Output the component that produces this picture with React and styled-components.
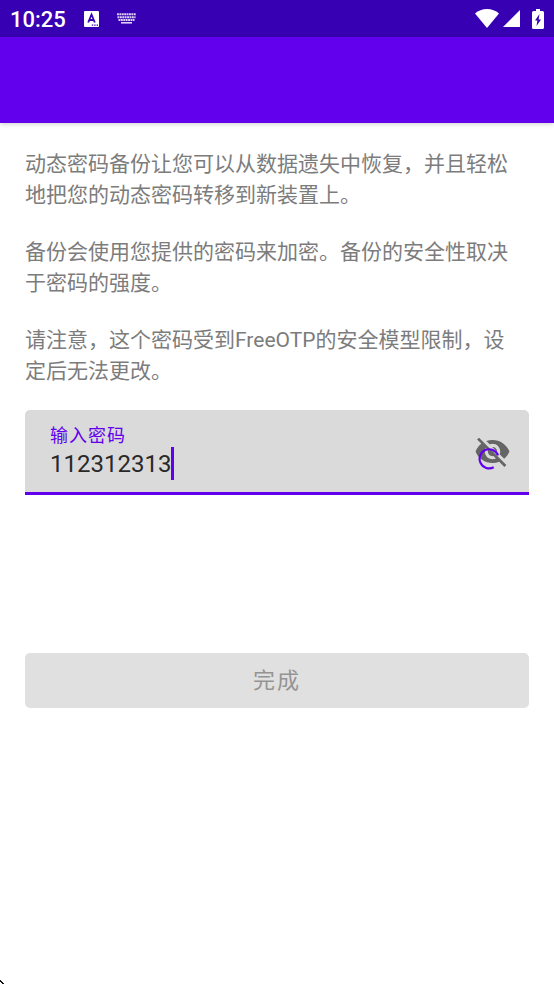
import React, { useState } from "react";
import styled, { createGlobalStyle } from "styled-components";

const GlobalStyle = createGlobalStyle`
  *, *::before, *::after { box-sizing: border-box; }
  body {
    margin: 0;
    background: #fff;
    font-family: Roboto, "Noto Sans CJK SC", sans-serif;
  }
`;

const Screen = styled.div`
  min-height: 100vh;
  display: flex;
  flex-direction: column;
`;

const StatusBar = styled.header`
  height: 37px;
  padding: 0 10px;
  display: flex;
  align-items: center;
  justify-content: space-between;
  background: #3700b3;
  color: #fff;
`;

const StatusGroup = styled.div`
  display: flex;
  align-items: center;
  gap: ${(p) => p.$gap}px;

  svg { display: block; }
`;

const Clock = styled.time`
  font-size: 22px;
  line-height: 26px;
  font-weight: 500;
  padding-top: 2px;
`;

const AppBar = styled.div`
  height: 86px;
  background: #6200ee;
  box-shadow: 0 1px 5px rgba(0, 0, 0, 0.2);
`;

const Content = styled.main`
  flex: 1;
  padding: 26px 25px;
  display: flex;
  flex-direction: column;
`;

const Message = styled.p`
  margin: 0 0 26px;
  color: #7c7c7c;
  font-size: 21px;
  line-height: 31px;

  &:last-of-type { margin-bottom: 23px; }
`;

const Field = styled.div`
  height: 85px;
  padding: 0 18px 0 25px;
  display: flex;
  align-items: center;
  justify-content: space-between;
  background: #dadada;
  border-bottom: 3px solid #6200ee;
  border-radius: 5px 5px 0 0;
`;

const FieldText = styled.div`
  min-width: 0;
  padding-top: 2px;
  display: flex;
  flex-direction: column;
`;

const FieldLabel = styled.label`
  color: #6200ee;
  font-size: 18px;
  line-height: 22px;
  letter-spacing: 1px;
`;

const InputLine = styled.div`
  display: flex;
  align-items: center;
`;

const PasswordInput = styled.input`
  field-sizing: content;
  max-width: 100%;
  height: 33px;
  padding: 2px 0 0;
  border: 0;
  outline: 0;
  background: transparent;
  color: #292929;
  caret-color: transparent;
  font: 400 24px/30px Roboto, sans-serif;
`;

const Caret = styled.span`
  width: 3px;
  height: 33px;
  background: #6200ee;
`;

const IconButton = styled.button`
  flex: none;
  padding: 0;
  border: 0;
  background: transparent;
  cursor: pointer;

  svg { display: block; }
`;

const DoneButton = styled.button`
  height: 55px;
  margin-top: 158px;
  border: 0;
  border-radius: 5px;
  background: #e0e0e0;
  color: #949494;
  font-family: Roboto, "Noto Sans CJK SC", sans-serif;
  font-size: 22px;
  line-height: 32px;
  letter-spacing: 2px;
`;

const CornerMark = styled.svg`
  position: fixed;
  left: 0;
  bottom: 0;
`;

const InputModeIcon = () => (
  <svg width="15" height="16" viewBox="0 0 15 16" aria-hidden="true">
    <rect width="15" height="16" rx="1" fill="#fff" />
    <path d="M4.200 11.500 7.500 3.500 10.800 11.500M5.500 9h4" fill="none" stroke="#3700b3" strokeWidth="1.800" />
    <path d="M7.800 14.200h1.400M10.200 14.200h1.400M12.600 14.200H14" stroke="#3700b3" strokeWidth="1.200" />
  </svg>
);

const KeyboardIcon = () => (
  <svg width="19" height="11" viewBox="0 0 19 11" fill="none" stroke="#ddd2f4" aria-hidden="true">
    <path d="M0 1.200h19" strokeWidth="2" strokeDasharray="1.900 .5" />
    <path d="M.5 4.200h18" strokeWidth="2" strokeDasharray="1.900 .5" />
    <path d="M1.500 7h16" strokeWidth="1.800" strokeDasharray="1.900 .5" />
    <path d="M4 9.800h11" strokeWidth="1.600" />
  </svg>
);

const WifiIcon = () => (
  <svg width="24" height="19" viewBox="0 0 24 19" fill="#fff" aria-hidden="true">
    <path d="M0 4.500C3.300 1.700 7.400 0 12 0s8.700 1.700 12 4.500L12 19Z" />
  </svg>
);

const SignalIcon = () => (
  <svg width="17" height="17" viewBox="0 0 17 17" fill="#fff" aria-hidden="true">
    <path d="M17 0v17H0Z" />
  </svg>
);

const BatteryIcon = () => (
  <svg width="12" height="20" viewBox="0 0 12 20" aria-hidden="true">
    <path d="M4 0h4v2h2.500Q12 2 12 3.500v15Q12 20 10.500 20h-9Q0 20 0 18.500v-15Q0 2 1.500 2H4Z" fill="#fff" />
    <path d="M7.500 5 3 11.500h2.400L4.500 17 9 10.500H6.600Z" fill="#3700b3" />
  </svg>
);

const VisibilityIcon = () => (
  <svg width="37" height="37" viewBox="0 0 24 24" aria-hidden="true">
    <path
      fill="#656565"
      d="M12 7c2.760 0 5 2.240 5 5 0 .65-.13 1.260-.36 1.830l2.920 2.920c1.510-1.260 2.700-2.890 3.430-4.750-1.730-4.390-6-7.500-11-7.500-1.400 0-2.740.25-3.980.7l2.160 2.160C10.740 7.130 11.350 7 12 7zM2 4.270l2.280 2.280.46.46C3.080 8.300 1.780 10.020 1 12c1.730 4.390 6 7.500 11 7.500 1.550 0 3.030-.3 4.380-.84l.42.42L19.730 22 21 20.730 3.270 3 2 4.270zM7.530 9.800l1.550 1.550c-.05.21-.08.43-.08.65 0 1.660 1.340 3 3 3 .22 0 .44-.03.65-.08l1.550 1.550c-.67.33-1.410.53-2.200.53-2.760 0-5-2.240-5-5 0-.79.2-1.530.53-2.200zm4.310-.78l3.150 3.150.02-.16c0-1.660-1.340-3-3-3l-.17.01z"
    />
    <path d="M15.600 14.500A6.200 6.200 0 1 0 12.800 22.200" fill="none" stroke="#6200ee" strokeWidth="1.400" />
  </svg>
);

export default function App() {
  const [password, setPassword] = useState("112312313");
  const [visible, setVisible] = useState(true);

  return (
    <Screen>
      <GlobalStyle />
      <StatusBar>
        <StatusGroup $gap={18}>
          <Clock>10:25</Clock>
          <InputModeIcon />
          <KeyboardIcon />
        </StatusGroup>
        <StatusGroup $gap={12}>
          <StatusGroup $gap={4}>
            <WifiIcon />
            <SignalIcon />
          </StatusGroup>
          <BatteryIcon />
        </StatusGroup>
      </StatusBar>
      <AppBar />
      <Content>
        <Message>
          动态密码备份让您可以从数据遗失中恢复，并且轻松<br />
          地把您的动态密码转移到新装置上。
        </Message>
        <Message>
          备份会使用您提供的密码来加密。备份的安全性取决<br />
          于密码的强度。
        </Message>
        <Message>
          请注意，这个密码受到FreeOTP的安全模型限制，设<br />
          定后无法更改。
        </Message>
        <Field>
          <FieldText>
            <FieldLabel htmlFor="password">输入密码</FieldLabel>
            <InputLine>
              <PasswordInput
                id="password"
                type={visible ? "text" : "password"}
                value={password}
                onChange={(e) => setPassword(e.target.value)}
              />
              <Caret />
            </InputLine>
          </FieldText>
          <IconButton type="button" aria-label="显示密码" onClick={() => setVisible(!visible)}>
            <VisibilityIcon />
          </IconButton>
        </Field>
        <DoneButton type="button" disabled>完成</DoneButton>
      </Content>
      <CornerMark width="4" height="4" viewBox="0 0 4 4" aria-hidden="true">
        <path d="M0 0h1v1h1v1h1v1h1v1H2V3H1V2H0Z" fill="#111" />
      </CornerMark>
    </Screen>
  );
}
